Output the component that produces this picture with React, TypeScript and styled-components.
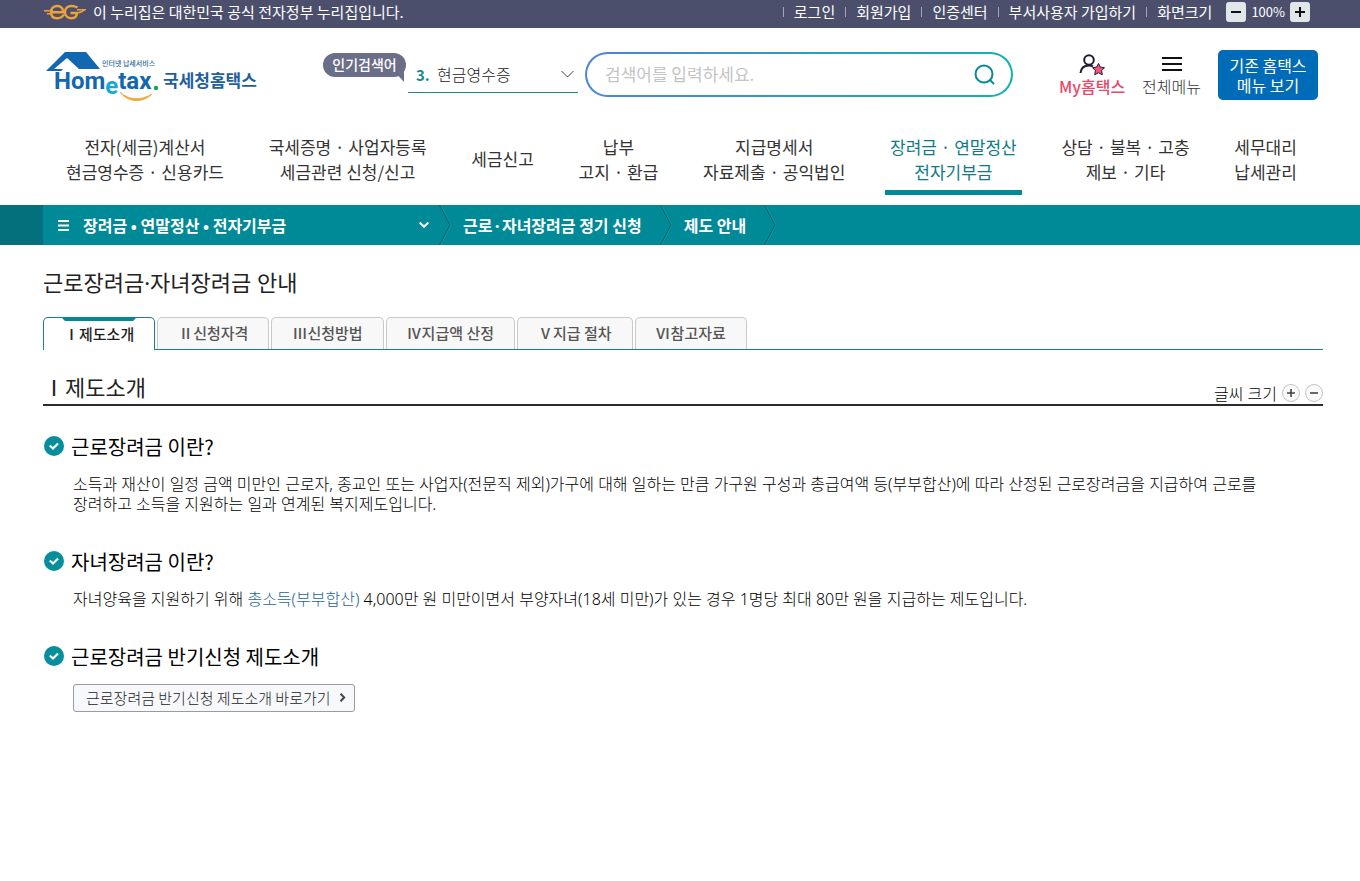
import React from 'react';
import styled, { createGlobalStyle } from 'styled-components';

const teal = '#008997';
const mixedFont = "'Noto Sans', 'Noto Sans CJK KR', sans-serif";

const GlobalStyle = createGlobalStyle`
  *, *::before, *::after { box-sizing: border-box; }
  body { margin: 0; background: #fff; color: #222; }
  body, button, input, select {
    font-family: 'Noto Sans CJK KR', 'Noto Sans', sans-serif;
  }
  h1, h2, h3, p, ul, ol { margin: 0; padding: 0; }
  ul, ol { list-style: none; }
  a { color: inherit; text-decoration: none; }
  button { cursor: pointer; }
`;

const TopBar = styled.div`
  display: flex;
  align-items: center;
  justify-content: space-between;
  height: 28px;
  padding: 0 50px 4px 43px;
  background: #4b4f6c;
  color: #fff;
  font-size: 15px;
  line-height: 20px;
  white-space: nowrap;
`;

const Notice = styled.p`
  display: flex;
  align-items: center;
  gap: 7px;
`;

const UtilList = styled.ul`
  display: flex;
  align-items: center;
`;

const UtilItem = styled.li`
  display: flex;
  align-items: center;
  padding-right: 10px;

  &::before {
    content: '';
    width: 1px;
    height: 10px;
    margin-right: 10px;
    background: #a3a5b5;
  }
`;

const ZoomGroup = styled.div`
  display: flex;
  align-items: center;
  gap: 5px;
  padding-left: 4px;
  font-size: 13px;
`;

const ZoomButton = styled.button`
  display: flex;
  align-items: center;
  justify-content: center;
  width: 20px;
  height: 20px;
  padding: 0;
  border: 0;
  border-radius: 3px;
  background: #e1e7e8;
`;

const Header = styled.header`
  display: flex;
  align-items: flex-start;
  padding: 22px 42px 0 43px;
  white-space: nowrap;
`;

const LogoLink = styled.a`
  display: block;
  width: 280px;
  flex: none;
`;

const Badge = styled.strong`
  position: relative;
  flex: none;
  width: 83px;
  height: 24px;
  margin-top: 3px;
  border-radius: 12px;
  background: #6b6e88;
  color: #fff;
  font-size: 14px;
  font-weight: 500;
  line-height: 23px;
  text-align: center;

  &::after {
    content: '';
    position: absolute;
    right: 2px;
    bottom: -5px;
    border-top: 10px solid #6b6e88;
    border-left: 9px solid transparent;
  }
`;

const Popular = styled.label`
  display: flex;
  align-items: center;
  flex: none;
  width: 170px;
  height: 43px;
  margin-left: 2px;
  padding: 6px 4px 0 8px;
  border-bottom: 1px solid #1f8a7d;
  font-size: 16px;
`;

const Rank = styled.b`
  width: 17px;
  color: #158a8c;
  font-size: 15px;
`;

const PopularSelect = styled.select`
  flex: 1;
  min-width: 0;
  padding: 0 4px;
  border: 0;
  background: transparent;
  appearance: none;
  color: #222;
  font-size: 16px;
  font-weight: 300;
`;

const SearchForm = styled.form`
  display: flex;
  align-items: center;
  flex: 1;
  min-width: 0;
  height: 45px;
  margin: 2px 46px 0 7px;
  padding: 0 15px 0 18px;
  border: 2px solid transparent;
  border-radius: 23px;
  background:
    linear-gradient(#fff, #fff) padding-box,
    linear-gradient(90deg, #4c85d8, #12b1ae) border-box;
`;

const SearchInput = styled.input`
  flex: 1;
  min-width: 0;
  padding: 0 0 2px;
  border: 0;
  outline: 0;
  background: transparent;
  font-size: 17px;

  &::placeholder { color: #c4c4c4; }
`;

const IconButton = styled.button`
  display: flex;
  align-items: center;
  justify-content: center;
  padding: 0;
  border: 0;
  background: transparent;
`;

const Shortcut = styled.a<{ $accent?: boolean }>`
  display: flex;
  flex-direction: column;
  align-items: center;
  flex: none;
  margin-right: 17px;
  padding-top: 2px;
  color: ${p => (p.$accent ? '#e8486a' : '#333')};
  font-size: 16px;
  font-weight: ${p => (p.$accent ? 500 : 300)};
  line-height: 20px;
`;

const OldMenu = styled.button`
  flex: none;
  width: 100px;
  height: 50px;
  padding: 0;
  border: 0;
  border-radius: 5px;
  background: #006cb8;
  color: #fff;
  font-size: 16px;
  line-height: 20px;
  white-space: pre;
`;

const MainNav = styled.nav`
  padding: 27px 58px 0 61px;
`;

const NavList = styled.ul`
  display: flex;
  justify-content: space-between;
`;

const NavLink = styled.a<{ $active?: boolean }>`
  display: flex;
  align-items: center;
  justify-content: center;
  height: 61px;
  padding: 0 5px 7px;
  border-bottom: 5px solid ${p => (p.$active ? teal : 'transparent')};
  color: ${p => (p.$active ? '#0b7c86' : '#333')};
  font-size: 17px;
  line-height: 25px;
  text-align: center;
  white-space: pre;
`;

const Crumbs = styled.nav`
  display: flex;
  height: 40px;
  margin-top: 10px;
  border-left: 43px solid #04707b;
  background: ${teal};
  color: #fff;
  font-size: 16px;
  font-weight: 700;
  white-space: nowrap;
`;

const CrumbMenu = styled.button`
  display: flex;
  align-items: center;
  width: 396px;
  padding: 0 10px 0 15px;
  border: 0;
  background: transparent;
  color: inherit;
  font-size: 16px;
  font-weight: 700;

  span { flex: 1; padding-left: 14px; text-align: left; }
`;

const Crumb = styled.a`
  display: flex;
  align-items: center;
  padding: 0 18px 0 11px;
`;

const Main = styled.main`
  padding: 22px 37px 40px 43px;
`;

const PageTitle = styled.h1`
  font-family: ${mixedFont};
  font-size: 22px;
  font-weight: 400;
  line-height: 30px;
`;

const Tabs = styled.div`
  display: flex;
  gap: 2px;
  margin-top: 20px;
  border-bottom: 1px solid #1c7f87;
`;

const Tab = styled.button<{ $active?: boolean }>`
  position: relative;
  height: ${p => (p.$active ? '33px' : '32px')};
  margin-bottom: ${p => (p.$active ? '-1px' : '0')};
  padding: 0 20px 2px;
  border: 1px solid ${p => (p.$active ? '#1c7f87' : '#c9c9c9')};
  border-bottom: 0;
  border-radius: 5px 5px 0 0;
  background: ${p => (p.$active ? '#fff' : '#f8f8f8')};
  color: ${p => (p.$active ? '#222' : '#555')};
  font-size: 15px;
  font-weight: 500;

  &::before {
    content: '';
    display: ${p => (p.$active ? 'block' : 'none')};
    position: absolute;
    top: -1px;
    left: 17px;
    right: 17px;
    border-top: 4px solid ${teal};
    border-left: 4px solid transparent;
    border-right: 4px solid transparent;
  }
`;

const SectionHead = styled.div`
  display: flex;
  align-items: flex-end;
  justify-content: space-between;
  height: 56px;
  border-bottom: 2px solid #2c2c2c;
`;

const SectionTitle = styled.h2`
  padding-bottom: 3px;
  font-size: 22px;
  font-weight: 400;
  line-height: 30px;
`;

const TextSize = styled.div`
  display: flex;
  align-items: center;
  gap: 5px;
  color: #000;
  font-family: ${mixedFont};
  font-size: 16px;
  font-weight: 300;
  line-height: 20px;
`;

const RoundButton = styled.button`
  display: flex;
  align-items: center;
  justify-content: center;
  width: 18px;
  height: 18px;
  margin-bottom: 2px;
  padding: 0;
  border: 1px solid #c4c4c4;
  border-radius: 50%;
  background: #fafafa;
`;

const Topic = styled.section`
  margin-top: 26px;

  & + & { margin-top: 33px; }
`;

const TopicTitle = styled.h3`
  display: flex;
  align-items: center;
  gap: 7px;
  color: #000;
  font-size: 20px;
  font-weight: 400;
  line-height: 30px;

  svg { margin: 0 0 3px 1px; }
`;

const TopicText = styled.p`
  padding: 12px 20px 0 30px;
  color: #000;
  font-family: ${mixedFont};
  font-size: 16px;
  font-weight: 300;
  line-height: 20px;
  word-break: keep-all;

  a { color: #1c6596; }
`;

const GoButton = styled.button`
  display: flex;
  align-items: center;
  gap: 8px;
  height: 28px;
  margin: 12px 0 0 30px;
  padding: 0 8px 1px 12px;
  border: 1px solid #999ba0;
  border-radius: 3px;
  background: #f7f8fb;
  color: #222;
  font-size: 15px;
  font-weight: 300;
`;

const EgLogo = () => (
  <svg width="43" height="18" viewBox="0 0 43 18" fill="none" stroke="#eda33a" strokeWidth="2.4" aria-hidden="true">
    <path d="M1 7.800H10M4 10.800H9" strokeWidth="1.500" />
    <path d="M9 9.300H20C20.500 5 17.500 3 14.500 3C10.500 3 8 5.500 8 9C8 13 10.500 15.200 14 15.200C17 15.200 19.500 14 21 11.500" />
    <path d="M34.500 4.500C32.500 3.400 30.500 3 28.500 3C24.500 3 22 5.500 22 9C22 13 25 15.200 28.500 15.200C31.500 15.200 33.800 14 34 10H27.500" />
    <path d="M34 10C37.500 9.800 40 8.500 42 6.800H34" strokeWidth="1.500" />
  </svg>
);

const HometaxLogo = () => (
  <svg width="216" height="52" viewBox="0 0 216 52" role="img" aria-label="Hometax 국세청홈택스">
    <path d="M22 2H43L57 19H36L24 8L11 19H20L18 21H3Z" fill="#1268b0" />
    <text x="11" y="39" fontFamily="Roboto, sans-serif" fontWeight="700" fontSize="24" fill="#1268b0">
      Hom<tspan dy="5" fill="#15a9d4">e</tspan><tspan dy="-5">tax</tspan>
    </text>
    <circle cx="113" cy="38" r="2.200" fill="#1fa34a" />
    <path d="M77 42C85 50 98 51 109 44C99 54 84 52 77 42Z" fill="#f0a22e" stroke="#f0a22e" strokeWidth=".7" />
    <g fontFamily="'Noto Sans CJK KR', sans-serif">
      <text x="59" y="16" fontSize="7" fontWeight="500" fill="#2c6a9e">인터넷 납세서비스</text>
      <text x="120" y="37" fontSize="17" fontWeight="700" fill="#1d5f9f">국세청홈택스</text>
    </g>
  </svg>
);

const Bars = ({ plus, size, color, weight = 2 }: { plus?: boolean; size: number; color: string; weight?: number }) => (
  <svg width={size} height={size} viewBox="0 0 10 10" stroke={color} strokeWidth={weight} aria-hidden="true">
    <path d={plus ? 'M0 5H10M5 0V10' : 'M0 5H10'} />
  </svg>
);

const Check = () => (
  <svg width="20" height="20" viewBox="0 0 20 20" fill="none" aria-hidden="true">
    <circle cx="10" cy="10" r="10" fill="#078e9c" />
    <path d="M5.800 9.500L9 12.500L14 7.500" stroke="#fff" strokeWidth="2.200" />
  </svg>
);

const Divider = () => (
  <svg width="13" height="40" viewBox="0 0 13 40" fill="none" aria-hidden="true">
    <path d="M1.500 0L12 20L1.500 40" stroke="#2b9ca7" strokeWidth=".7" />
    <path d="M.5 0L11 20L.5 40" stroke="#04606b" strokeWidth=".9" />
  </svg>
);

const utilities = ['로그인', '회원가입', '인증센터', '부서사용자 가입하기', '화면크기'];

const navItems = [
  '전자(세금)계산서\n현금영수증 · 신용카드',
  '국세증명 · 사업자등록\n세금관련 신청/신고',
  '세금신고',
  '납부\n고지 · 환급',
  '지급명세서\n자료제출 · 공익법인',
  '장려금 · 연말정산\n전자기부금',
  '상담 · 불복 · 고충\n제보 · 기타',
  '세무대리\n납세관리',
];

const tabs = ['Ⅰ제도소개', 'Ⅱ신청자격', 'Ⅲ신청방법', 'Ⅳ지급액 산정', 'Ⅴ지급 절차', 'Ⅵ참고자료'];

export default function App() {
  return (
    <>
      <GlobalStyle />
      <TopBar>
        <Notice><EgLogo />이 누리집은 대한민국 공식 전자정부 누리집입니다.</Notice>
        <UtilList>
          {utilities.map(label => (
            <UtilItem key={label}><a href="#util">{label}</a></UtilItem>
          ))}
          <li>
            <ZoomGroup>
              <ZoomButton aria-label="화면 축소"><Bars size={10} color="#111" /></ZoomButton>
              100%
              <ZoomButton aria-label="화면 확대"><Bars plus size={10} color="#111" /></ZoomButton>
            </ZoomGroup>
          </li>
        </UtilList>
      </TopBar>

      <Header>
        <LogoLink href="#home"><HometaxLogo /></LogoLink>
        <Badge>인기검색어</Badge>
        <Popular>
          <Rank>3.</Rank>
          <PopularSelect aria-label="인기검색어">
            <option>현금영수증</option>
          </PopularSelect>
          <svg width="13" height="8" viewBox="0 0 13 8" fill="none" stroke="#444" aria-hidden="true">
            <path d="M.5 1L6.500 7L12.500 1" />
          </svg>
        </Popular>
        <SearchForm onSubmit={e => e.preventDefault()}>
          <SearchInput aria-label="검색어" placeholder="검색어를 입력하세요." />
          <IconButton aria-label="검색">
            <svg width="22" height="22" viewBox="0 0 22 22" fill="none" stroke="#0b8a94" strokeWidth="2">
              <circle cx="10" cy="10" r="8.500" />
              <path d="M16 16L20 20" />
            </svg>
          </IconButton>
        </SearchForm>
        <Shortcut href="#my" $accent>
          <svg width="26" height="24" viewBox="0 0 26 24" fill="none" stroke="#1d1d33" strokeWidth="2" aria-hidden="true">
            <circle cx="10" cy="8" r="4.800" />
            <path d="M1.500 21C2 16 5 13.500 10 13.500C11.500 13.500 13 13.800 14 14.500" />
            <path d="M19.500 11.500L21.400 15.100L25.500 15.700L22.600 18.600L23.300 22.700L19.500 20.800L15.700 22.700L16.400 18.600L13.500 15.700L17.600 15.100Z" fill="#f25577" strokeWidth="1" strokeLinejoin="round" />
          </svg>
          My홈택스
        </Shortcut>
        <Shortcut href="#all">
          <svg width="20" height="24" viewBox="0 0 20 24" stroke="#111" strokeWidth="2" aria-hidden="true">
            <path d="M0 6H20M0 12H20M0 18H20" />
          </svg>
          전체메뉴
        </Shortcut>
        <OldMenu>{'기존 홈택스\n메뉴 보기'}</OldMenu>
      </Header>

      <MainNav aria-label="주 메뉴">
        <NavList>
          {navItems.map((label, i) => (
            <li key={label}><NavLink href="#nav" $active={i === 5}>{label}</NavLink></li>
          ))}
        </NavList>
      </MainNav>

      <Crumbs aria-label="현재 위치">
        <CrumbMenu>
          <svg width="11" height="11" viewBox="0 0 11 11" stroke="#fff" strokeWidth="2" aria-hidden="true">
            <path d="M0 1H11M0 5.500H11M0 10H11" />
          </svg>
          <span>장려금 • 연말정산 • 전자기부금</span>
          <svg width="10" height="8" viewBox="0 0 10 8" fill="none" stroke="#fff" strokeWidth="2" aria-hidden="true">
            <path d="M.7 1.500L5 5.800L9.300 1.500" />
          </svg>
        </CrumbMenu>
        <Divider />
        <Crumb href="#apply">근로·자녀장려금 정기 신청</Crumb>
        <Divider />
        <Crumb href="#guide">제도 안내</Crumb>
        <Divider />
      </Crumbs>

      <Main>
        <PageTitle>근로장려금·자녀장려금 안내</PageTitle>
        <Tabs role="tablist">
          {tabs.map((label, i) => (
            <Tab key={label} role="tab" aria-selected={i === 0} $active={i === 0}>{label}</Tab>
          ))}
        </Tabs>

        <SectionHead>
          <SectionTitle>Ⅰ제도소개</SectionTitle>
          <TextSize>
            글씨 크기
            <RoundButton aria-label="글씨 크게"><Bars plus size={8} color="#444" /></RoundButton>
            <RoundButton aria-label="글씨 작게"><Bars size={8} color="#444" /></RoundButton>
          </TextSize>
        </SectionHead>

        <Topic>
          <TopicTitle><Check />근로장려금 이란?</TopicTitle>
          <TopicText>
            소득과 재산이 일정 금액 미만인 근로자, 종교인 또는 사업자(전문직 제외)가구에 대해 일하는 만큼 가구원 구성과 총급여액 등(부부합산)에 따라 산정된 근로장려금을 지급하여 근로를 장려하고 소득을 지원하는 일과 연계된 복지제도입니다.
          </TopicText>
        </Topic>
        <Topic>
          <TopicTitle><Check />자녀장려금 이란?</TopicTitle>
          <TopicText>
            자녀양육을 지원하기 위해 <a href="#income">총소득(부부합산)</a> 4,000만 원 미만이면서 부양자녀(18세 미만)가 있는 경우 1명당 최대 80만 원을 지급하는 제도입니다.
          </TopicText>
        </Topic>
        <Topic>
          <TopicTitle><Check />근로장려금 반기신청 제도소개</TopicTitle>
          <GoButton>
            근로장려금 반기신청 제도소개 바로가기
            <svg width="7" height="9" viewBox="0 0 7 9" fill="none" stroke="#444" strokeWidth="2" aria-hidden="true">
              <path d="M1.500 .8L5.200 4.500L1.500 8.200" />
            </svg>
          </GoButton>
        </Topic>
      </Main>
    </>
  );
}
